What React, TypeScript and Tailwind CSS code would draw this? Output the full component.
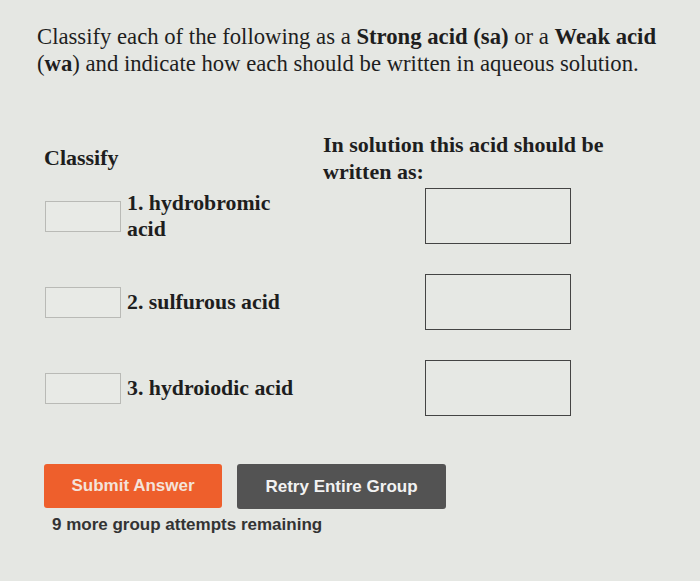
export default function App() {
  const rows = ["1. hydrobromic acid", "2. sulfurous acid", "3. hydroiodic acid"];

  return (
    <div className="w-[700px] h-[581px] overflow-hidden bg-[#e5e7e3] text-[#1e1e1e] font-['Liberation_Serif',serif]">
      <p className="pt-[23px] pl-[37px] w-[690px] text-[22.7px] leading-[27px]">
        Classify each of the following as a <b>Strong acid (sa)</b> or a{" "}
        <b>Weak acid</b> (<b>wa</b>) and indicate how each should be written in aqueous solution.
      </p>

      <div className="flex mt-[54px] pl-[44px] font-bold text-[22px] leading-[27px]">
        <div className="w-[279px] pt-[13px]">Classify</div>
        <div className="w-[330px]">In solution this acid should be written as:</div>
      </div>

      <div className="flex flex-col gap-[30px] mt-[3px] pl-[45px]">
        {rows.map((r, i) => (
          <div key={i} className="flex items-center h-[56px]">
            <div className="w-[76px] h-[31px] border border-[#b9bab6] bg-[#e8eae6]" />
            <div className="w-[170px] ml-[6px] font-bold text-[21.8px] leading-[26px]">{r}</div>
            <div className="ml-[128px] w-[146px] h-[56px] border border-[#444] bg-[#e6e8e4]" />
          </div>
        ))}
      </div>

      <div className="flex gap-[15px] mt-[48px] pl-[44px] font-['Liberation_Sans',sans-serif] font-bold">
        <button className="w-[178px] h-[44px] rounded-[3px] bg-[#ee5f2c] text-[#f4e3da] text-[17px]">
          Submit Answer
        </button>
        <button className="w-[209px] h-[45px] rounded-[3px] bg-[#535353] text-[#f2f2f2] text-[17px]">
          Retry Entire Group
        </button>
      </div>
      <p className="mt-[3px] pl-[52px] font-['Liberation_Sans',sans-serif] font-bold text-[17px] text-[#333]">
        9 more group attempts remaining
      </p>
    </div>
  );
}
